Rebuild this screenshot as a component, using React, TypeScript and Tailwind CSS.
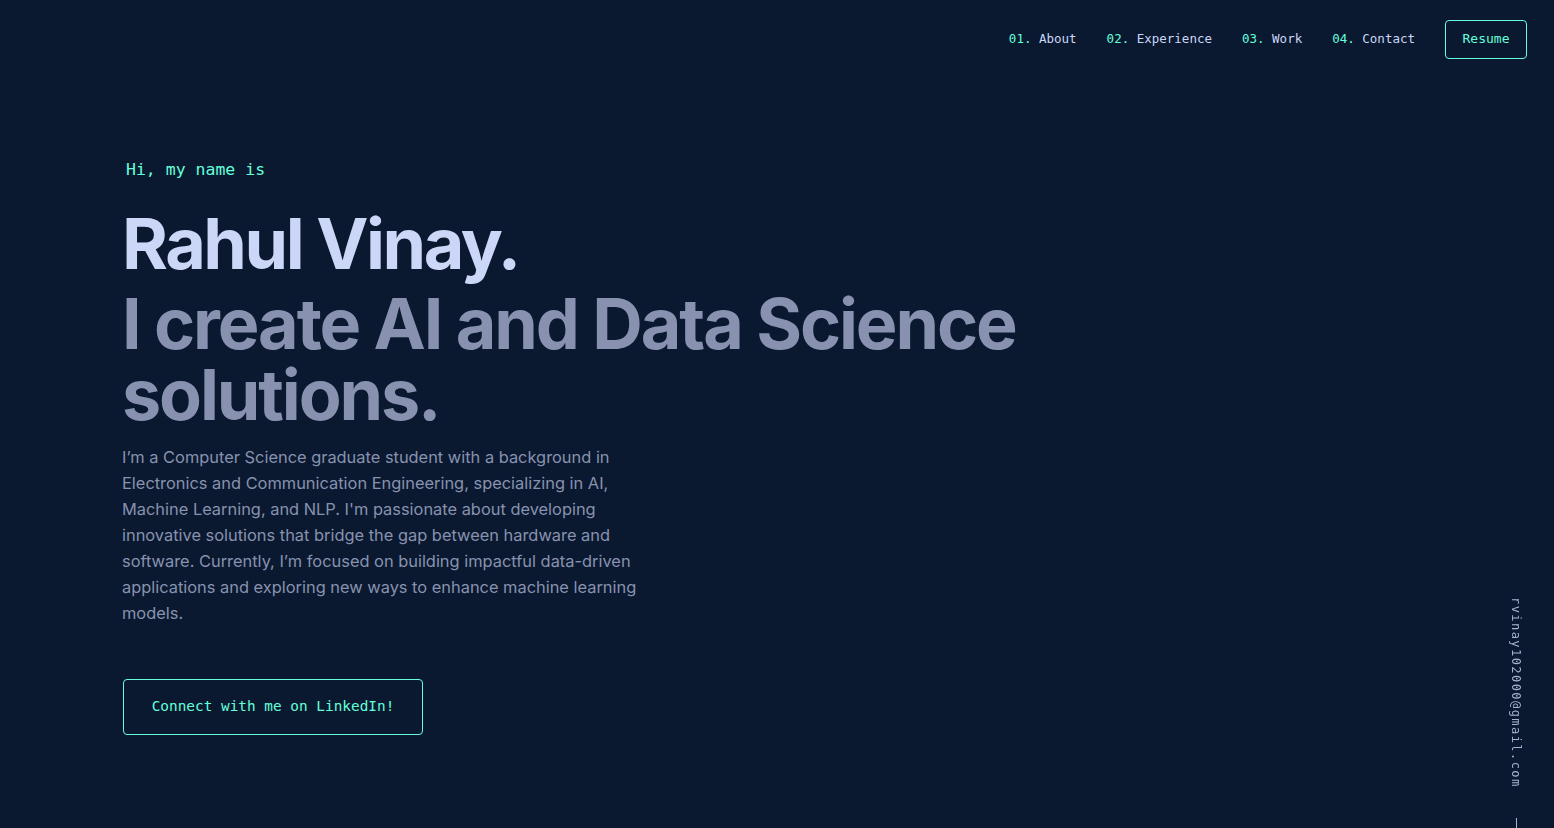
const mono = 'font-["DejaVu_Sans_Mono","Liberation_Mono",monospace]';
const sans = 'font-["Inter","Noto_Sans",sans-serif]';

const links = [
  { num: '01.', label: 'About' },
  { num: '02.', label: 'Experience' },
  { num: '03.', label: 'Work' },
  { num: '04.', label: 'Contact' },
];

function Nav() {
  return (
    <header className="flex h-[78px] items-center justify-end pr-[27px]">
      <nav className={`flex items-center ${mono} text-[12.5px]`}>
        <ol className="flex items-center gap-[30px]">
          {links.map((l) => (
            <li key={l.num} className="text-[#ccd6f6]">
              <span className="text-[#64ffda]">{l.num}</span> {l.label}
            </li>
          ))}
        </ol>
        <a className="ml-[30px] flex h-[39px] w-[82px] items-center justify-center rounded-[4px] border border-[#64ffda] text-[13px] text-[#64ffda]">
          Resume
        </a>
      </nav>
    </header>
  );
}

function Hero() {
  return (
    <section className="pl-[122px] pt-[80px]">
      <h1 className={`${mono} ml-[4px] text-[16.5px] leading-[24px] text-[#64ffda]`}>Hi, my name is</h1>
      <h2 className={`${sans} mt-[22px] text-[70px] font-bold leading-[80px] tracking-[-0.035em] text-[#ccd6f6]`}>
        Rahul Vinay.
      </h2>
      <h3 className={`${sans} mt-[4px] text-[70px] font-bold leading-[71px] tracking-[-0.03em] text-[#8892b0]`}>
        <span className="block">I create AI and Data Science</span>
        <span className="block">solutions.</span>
      </h3>
      <p className={`${sans} mt-[14px] text-[16.4px] leading-[26px] text-[#8892b0]`}>
        I’m a Computer Science graduate student with a background in
        <br />
        Electronics and Communication Engineering, specializing in AI,
        <br />
        Machine Learning, and NLP. I'm passionate about developing
        <br />
        innovative solutions that bridge the gap between hardware and
        <br />
        software. Currently, I’m focused on building impactful data-driven
        <br />
        applications and exploring new ways to enhance machine learning
        <br />
        models.
      </p>
      <a
        className={`${mono} mt-[53px] ml-px flex h-[56px] w-[300px] items-center justify-center rounded-[4px] border border-[#64ffda] text-[14.4px] text-[#64ffda]`}
      >
        Connect with me on LinkedIn!
      </a>
    </section>
  );
}

export default function App() {
  return (
    <div className="relative h-[828px] w-full overflow-hidden bg-[#0a192f]">
      <Nav />
      <Hero />
      <div className="fixed bottom-0 right-[29px] flex flex-col items-center">
        <span
          className={`${mono} text-[12px] tracking-[0.12em] text-[#a8b2d1] [writing-mode:vertical-rl]`}
        >
          rvinay102000@gmail.com
        </span>
        <div className="mt-[30px] h-[10px] w-px bg-[#a8b2d1]" />
      </div>
    </div>
  );
}
